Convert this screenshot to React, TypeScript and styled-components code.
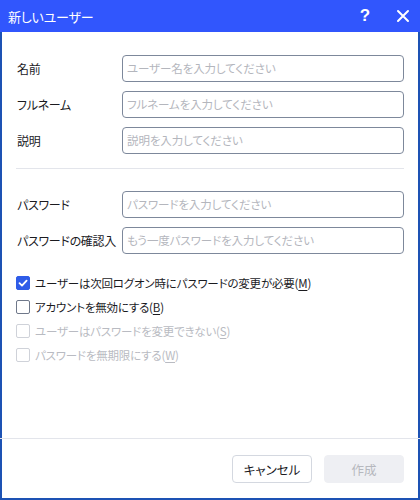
import React from "react"
import styled, { createGlobalStyle } from "styled-components"

const GlobalStyles = createGlobalStyle`
  html, body {
    margin: 0;
    padding: 0;
    background: #ffffff;
  }
  body {
    font-family: "Noto Sans CJK JP", "Noto Sans", sans-serif;
    font-feature-settings: "palt";
    -webkit-font-smoothing: antialiased;
  }
  * {
    box-sizing: border-box;
  }
`

const Window = styled.div`
  width: 420px;
  height: 500px;
  display: flex;
  flex-direction: column;
  border: 2px solid #1d52b4;
  border-top: none;
  background: #ffffff;
`

const TitleBar = styled.header`
  height: 32px;
  flex: 0 0 auto;
  display: flex;
  align-items: center;
  margin: 0 -2px;
  padding-left: 8px;
  background: #3156fd;
  color: #ffffff;
  font-size: 13px;
`

const Title = styled.span`
  flex: 1;
  letter-spacing: -0.2px;
`

const TitleButton = styled.button<{ $w: number }>`
  width: ${(p) => p.$w}px;
  height: 32px;
  border: none;
  background: transparent;
  color: #ffffff;
  display: flex;
  align-items: center;
  justify-content: center;
  padding: 0;
  font-family: "Liberation Sans", sans-serif;
  font-size: 17px;
  font-weight: bold;
`

const Body = styled.div`
  flex: 1;
  display: flex;
  flex-direction: column;
  padding: 23px 14px 0 14px;
`

const FieldGroup = styled.div`
  display: flex;
  flex-direction: column;
  gap: 9px;
`

const Row = styled.label`
  display: flex;
  align-items: center;
  height: 27px;
`

const Label = styled.span`
  width: 106px;
  padding-left: 1px;
  font-size: 12px;
  letter-spacing: -0.3px;
  color: #1b1b1f;
  white-space: nowrap;
`

const Input = styled.input`
  flex: 1;
  height: 27px;
  border: 1px solid #7d889b;
  border-radius: 4px;
  padding: 0 4px 1px 4px;
  font-family: inherit;
  font-feature-settings: "palt";
  font-size: 11.5px;
  letter-spacing: -0.1px;
  color: #1b1b1f;
  outline: none;
  &::placeholder {
    color: #b4b6bd;
  }
`

const Divider = styled.hr`
  border: none;
  border-top: 1px solid #e3e5eb;
  margin: 14px 0 22px 0;
  height: 0;
`

const Options = styled.div`
  display: flex;
  flex-direction: column;
  margin-top: 17px;
`

const Option = styled.label<{ $disabled?: boolean }>`
  display: flex;
  align-items: center;
  height: 24px;
  gap: 5px;
  font-size: 11.5px;
  letter-spacing: -0.2px;
  color: ${(p) => (p.$disabled ? "#b9bbc2" : "#1b1b1f")};
`

const Box = styled.span<{ $checked?: boolean; $disabled?: boolean }>`
  width: 14px;
  height: 14px;
  border-radius: 2px;
  flex: 0 0 auto;
  display: flex;
  align-items: center;
  justify-content: center;
  background: ${(p) => (p.$checked ? "#2f5ce8" : "#ffffff")};
  border: 1px solid
    ${(p) => (p.$checked ? "#2f5ce8" : p.$disabled ? "#cfd2d9" : "#6f788a")};
`

const Key = styled.u`
  text-underline-offset: 2px;
`

const Footer = styled.footer`
  flex: 0 0 auto;
  display: flex;
  justify-content: flex-end;
  gap: 12px;
  margin: 0 -2px;
  padding: 16px 16px 15px 14px;
  border-top: 1px solid #e3e5eb;
`

const Button = styled.button<{ $primary?: boolean }>`
  width: 80px;
  height: 28px;
  border-radius: 4px;
  font-family: inherit;
  font-feature-settings: "palt";
  font-size: 12.5px;
  border: 1px solid ${(p) => (p.$primary ? "#eeeff3" : "#d4d8e0")};
  background: ${(p) => (p.$primary ? "#eeeff3" : "#ffffff")};
  color: ${(p) => (p.$primary ? "#b6b8be" : "#1b1b1f")};
`

const Check = () => (
  <svg width="10" height="10" viewBox="0 0 10 10">
    <path d="M1.5 5.2 L4 7.6 L8.6 2.6" fill="none" stroke="#ffffff" strokeWidth="1.8" strokeLinecap="round" strokeLinejoin="round" />
  </svg>
)

const Close = () => (
  <svg width="14" height="14" viewBox="0 0 14 14">
    <path d="M2 2 L12 12 M12 2 L2 12" stroke="#ffffff" strokeWidth="2" strokeLinecap="round" />
  </svg>
)

const options = [
  { text: "ユーザーは次回ログオン時にパスワードの変更が必要", key: "M", checked: true },
  { text: "アカウントを無効にする", key: "B" },
  { text: "ユーザーはパスワードを変更できない", key: "S", disabled: true },
  { text: "パスワードを無期限にする", key: "W", disabled: true },
]

function App() {
  return (
    <>
      <GlobalStyles />
      <Window>
        <TitleBar>
          <Title>新しいユーザー</Title>
          <TitleButton $w={42}>?</TitleButton>
          <TitleButton $w={34}>
            <Close />
          </TitleButton>
        </TitleBar>
        <Body>
          <FieldGroup>
            <Row>
              <Label>名前</Label>
              <Input placeholder="ユーザー名を入力してください" />
            </Row>
            <Row>
              <Label>フルネーム</Label>
              <Input placeholder="フルネームを入力してください" />
            </Row>
            <Row>
              <Label>説明</Label>
              <Input placeholder="説明を入力してください" />
            </Row>
          </FieldGroup>
          <Divider />
          <FieldGroup>
            <Row>
              <Label>パスワード</Label>
              <Input type="password" placeholder="パスワードを入力してください" />
            </Row>
            <Row>
              <Label>パスワードの確認入</Label>
              <Input type="password" placeholder="もう一度パスワードを入力してください" />
            </Row>
          </FieldGroup>
          <Options>
            {options.map((o) => (
              <Option key={o.key} $disabled={o.disabled}>
                <Box $checked={o.checked} $disabled={o.disabled}>
                  {o.checked && <Check />}
                </Box>
                <span>
                  {o.text}(<Key>{o.key}</Key>)
                </span>
              </Option>
            ))}
          </Options>
        </Body>
        <Footer>
          <Button>キャンセル</Button>
          <Button $primary disabled>
            作成
          </Button>
        </Footer>
      </Window>
    </>
  )
}

export default App
